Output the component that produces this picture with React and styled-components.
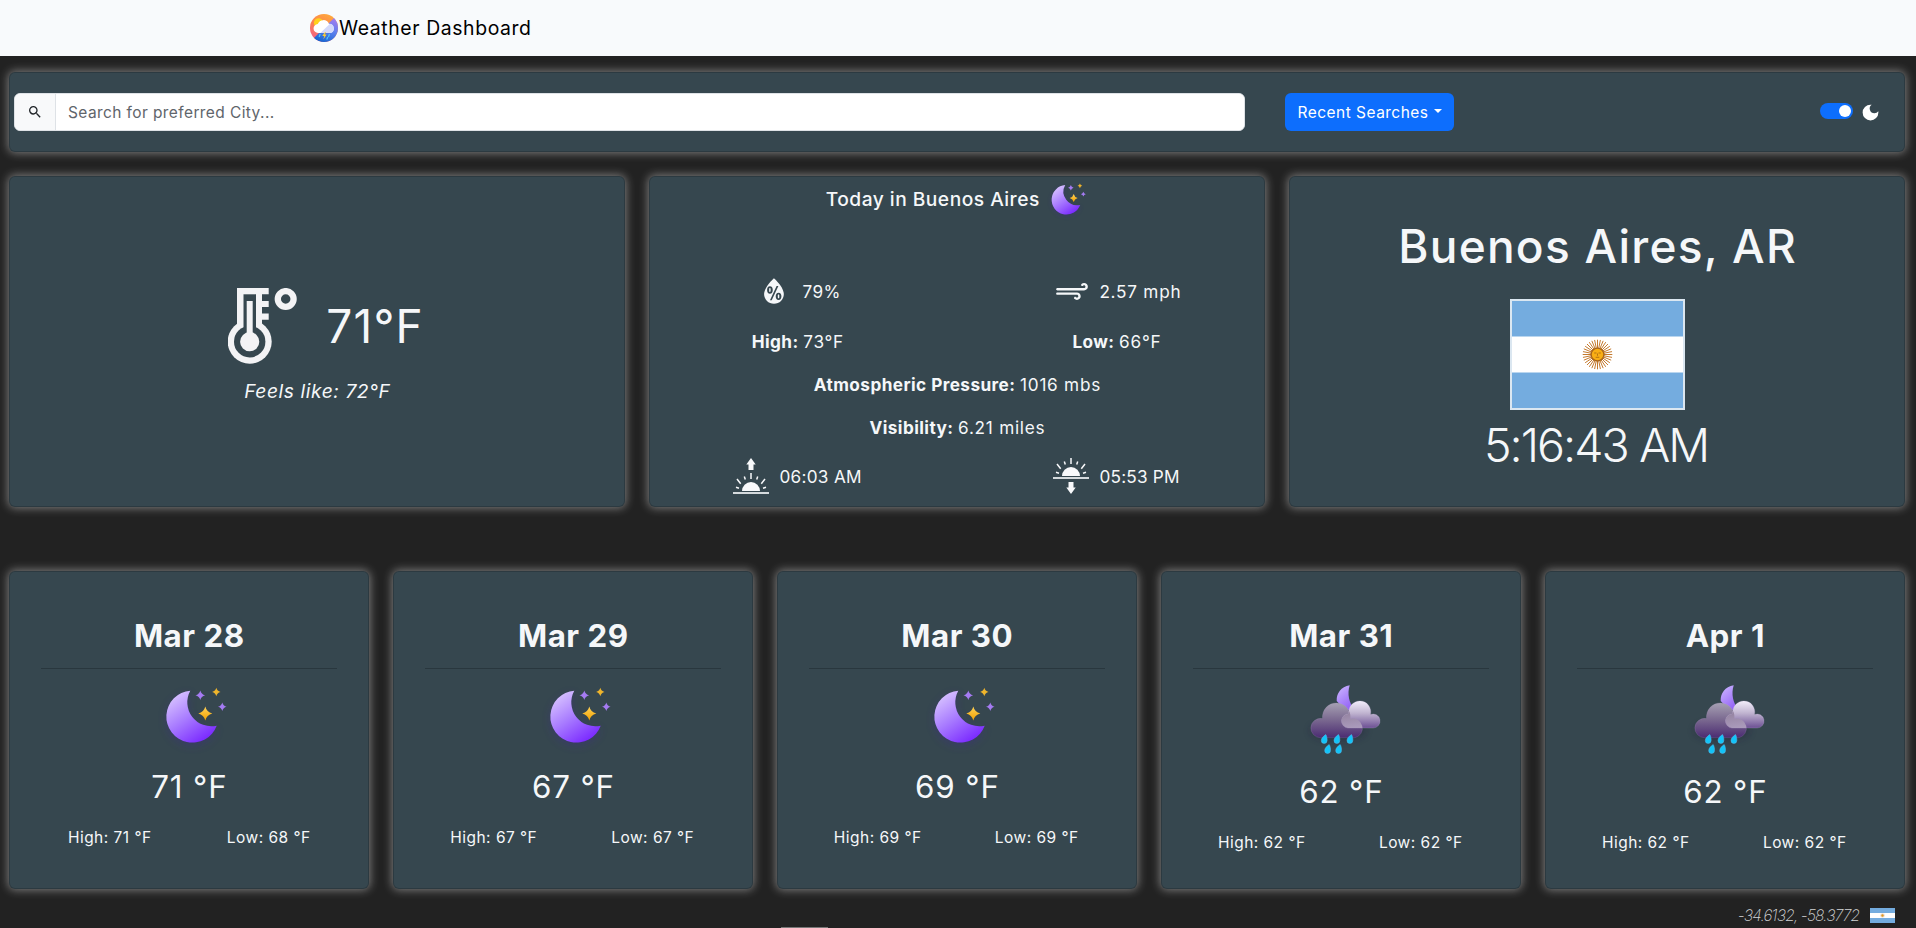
import React from "react";
import styled, { createGlobalStyle, css } from "styled-components";
import { MdDarkMode, MdSearch } from "react-icons/md";
import { WiHumidity, WiStrongWind } from "react-icons/wi";

const card = "#36474f";
const light = "#f5f7f9";

const GlobalStyle = createGlobalStyle`
  * { box-sizing: border-box; }
  html, body { height: 100%; overflow: hidden; }
  body {
    margin: 0;
    background: #222;
    color: ${light};
    font-family: Inter, "Liberation Sans", sans-serif;
    font-size: 15.5px;
  }
  svg { display: block; flex: none; }
`;

/* Letter spacing without the trailing gap, so centred text stays centred. */
const spaced = (px) => css`
  letter-spacing: ${px}px;
  margin-right: ${-px}px;
  white-space: nowrap;
`;

const Page = styled.div`
  display: flex;
  flex-direction: column;
  height: 928px;
  overflow: hidden;
`;

const Navbar = styled.header`
  display: flex;
  align-items: center;
  flex: none;
  height: 56px;
  padding-left: 310px;
  background: #f8fafc;
  color: #000;
`;

const Brand = styled.span`
  padding-left: 1px;
  font-size: 19.4px;
  ${spaced(0.6)}
`;

const Main = styled.main`
  display: flex;
  flex-direction: column;
  gap: 24px;
  padding: 16px 11px 0 9px;
`;

const Panel = styled.section`
  background: ${card};
  border: 1px solid rgba(0, 0, 0, 0.175);
  border-radius: 6px;
  box-shadow: 0 0 10px 1px rgba(255, 255, 255, 0.42);
`;

const SearchPanel = styled(Panel)`
  display: flex;
  align-items: center;
  height: 80px;
  padding: 0 23px 0 4px;
`;

const InputGroup = styled.div`
  display: flex;
  width: 1231px;
  height: 38px;
  border: 1px solid #dee2e6;
  border-radius: 6px;
  background: #fff;
  overflow: hidden;
`;

const InputAddon = styled.span`
  display: flex;
  align-items: center;
  justify-content: center;
  width: 41px;
  border-right: 1px solid #dee2e6;
  background: #f8f9fa;
  color: #212529;
`;

const SearchInput = styled.input`
  flex: 1;
  border: 0;
  outline: 0;
  padding: 1px 12px 0;
  font: inherit;
  letter-spacing: 0.4px;
  &::placeholder { color: #5f656b; opacity: 1; }
`;

const RecentButton = styled.button`
  display: flex;
  align-items: center;
  gap: 5px;
  width: 169px;
  height: 38px;
  margin-left: 40px;
  padding: 1px 0 0 12.5px;
  border: 0;
  border-radius: 6px;
  background: #0d6efd;
  color: #fff;
  font: inherit;
`;

const ButtonLabel = styled.span`
  ${spaced(0.47)}
`;

const Caret = styled.span`
  margin: -3px 0 0 1px;
  border: 4.5px solid transparent;
  border-top-color: #fff;
  border-bottom: 0;
`;

const ThemeToggle = styled.div`
  display: flex;
  align-items: center;
  gap: 7px;
  margin-left: auto;
`;

const Switch = styled.span`
  display: flex;
  justify-content: flex-end;
  width: 33px;
  height: 16px;
  margin-top: -3px;
  padding: 2px;
  border-radius: 8px;
  background: #0d6efd;
  &::after {
    content: "";
    width: 12px;
    height: 12px;
    border-radius: 50%;
    background: #fff;
  }
`;

const Overview = styled.div`
  display: grid;
  grid-template-columns: repeat(3, minmax(0, 1fr));
  gap: 24px;
`;

const OverviewPanel = styled(Panel)`
  display: flex;
  flex-direction: column;
  align-items: center;
  height: 331px;
`;

const CurrentPanel = styled(OverviewPanel)`
  padding-top: 100px;
`;

const CurrentRow = styled.div`
  display: flex;
  align-items: center;
  gap: 29px;
  height: 98px;
  padding-left: 17px;
`;

const CurrentTemp = styled.span`
  font-size: 46px;
  ${spaced(1.2)}
`;

const FeelsLike = styled.em`
  line-height: 32px;
  font-size: 19.2px;
  ${spaced(0.58)}
`;

const DetailTitle = styled.h2`
  display: flex;
  align-items: center;
  gap: 13px;
  height: 44px;
  margin: 0 0 45px;
  padding-right: 2px;
  font-size: 19.2px;
  font-weight: 500;
`;

const TitleText = styled.span`
  ${spaced(0.48)}
`;

const DetailRow = styled.div`
  display: flex;
  align-items: center;
  justify-content: center;
  flex: none;
  width: 638px;
  height: ${(p) => p.$height}px;
`;

const DetailCell = styled.div`
  display: flex;
  align-items: center;
  justify-content: center;
  gap: ${(p) => p.$gap ?? 5}px;
  width: 319px;
`;

const DetailPair = styled.div`
  display: flex;
  gap: 5px;
`;

const Value = styled.span`
  font-size: 17.2px;
  ${(p) => spaced(p.$spacing ?? 0.75)}
`;

const Label = styled.strong`
  font-size: 17.2px;
  font-weight: 700;
  ${(p) => spaced(p.$spacing ?? 0.43)}
`;

const PlacePanel = styled(OverviewPanel)`
  padding-top: 39px;
`;

const PlaceName = styled.h1`
  margin: 0 0 23px;
  font-size: 46px;
  font-weight: 500;
  line-height: 60px;
  ${spaced(1.25)}
`;

const FlagFrame = styled.div`
  width: 175px;
  height: 111px;
  border: 2px solid #dbe7f1;
`;

const Clock = styled.div`
  margin-top: 6px;
  font-size: 46.5px;
  font-weight: 350;
  line-height: 58px;
  ${spaced(-1.95)}
`;

const Forecast = styled.div`
  display: grid;
  grid-template-columns: repeat(5, minmax(0, 1fr));
  gap: 24px;
  margin-top: 40px;
`;

const DayPanel = styled(Panel)`
  display: flex;
  flex-direction: column;
  align-items: center;
  height: 318px;
  padding: 39px 31px 0;
`;

const DayName = styled.h3`
  margin: 0;
  font-size: 31.3px;
  font-weight: 700;
  line-height: 50px;
  ${spaced(0.5)}
`;

const Divider = styled.hr`
  flex: none;
  width: 100%;
  height: 1px;
  margin: 7px 0 0;
  border: 0;
  background: #29373e;
`;

const DayIcon = styled.div`
  display: flex;
  justify-content: center;
  height: ${(p) => (p.$tall ? 98 : 93)}px;
  padding: ${(p) => (p.$tall ? "15px 0 0 10px" : "18px 0 0 15px")};
`;

const DayTemp = styled.div`
  font-size: 31.3px;
  line-height: 50px;
  ${spaced(0.85)}
`;

const RangeRow = styled.div`
  display: grid;
  grid-template-columns: 159px 159px;
  margin-top: 14px;
  line-height: 24px;
  text-align: center;
`;

const RangeText = styled.span`
  ${spaced(0.47)}
`;

const Footer = styled.footer`
  display: flex;
  align-items: center;
  justify-content: flex-end;
  gap: 10px;
  height: 34px;
  padding: 4px 21px 0 0;
  margin-top: 10px;
`;

const Coordinates = styled.em`
  color: #d2d4d6;
  font-size: 15.5px;
  font-weight: 200;
  ${spaced(-0.85)}
`;

const BottomHandle = styled.div`
  position: absolute;
  left: 781px;
  top: 927px;
  width: 47px;
  height: 1px;
  background: #777;
`;

function Logo() {
  return (
    <svg width="28" height="28" viewBox="0 0 28 28">
      <defs>
        <linearGradient id="logoWarm" x1="0.6" y1="0" x2="0.1" y2="1">
          <stop offset="0" stopColor="#ffa63d" />
          <stop offset="0.45" stopColor="#fb8050" />
          <stop offset="1" stopColor="#ef5b94" />
        </linearGradient>
        <linearGradient id="logoCool" x1="0.8" y1="0" x2="0.4" y2="1">
          <stop offset="0" stopColor="#a77bf0" />
          <stop offset="0.5" stopColor="#5f80ee" />
          <stop offset="1" stopColor="#1767d2" />
        </linearGradient>
        <clipPath id="logoRound"><circle cx="14" cy="14" r="14" /></clipPath>
      </defs>
      <g clipPath="url(#logoRound)">
        <rect width="28" height="28" fill="url(#logoWarm)" />
        <path d="M25 3 3 25l8 3h17V3z" fill="url(#logoCool)" />
        <circle cx="8.5" cy="8.8" r="4.6" fill="#ffd21c" />
        <path d="M8.3 19a4.5 4.5 0 0 1-.5-9 6 6 0 0 1 11.1-.3 4.8 4.8 0 0 1 1.7 9.3z" fill="#fff" />
        <path d="m20 9.7-9.7 9.3h10.3A4.8 4.8 0 0 0 20 9.7" fill="#d3d9fb" />
        <path d="m15 18-2.7 4h2l-1 3.6 3.3-5h-2l1.4-2.6z" fill="#ffcf30" />
        <path d="m10 20.5-.7 2m10-2-.7 2m-1 1-.6 1.6" stroke="#4cc3fb" strokeWidth="1.3" strokeLinecap="round" />
      </g>
    </svg>
  );
}

function Thermometer() {
  return (
    <svg width="69" height="76" viewBox="0 0 69 76" fill="#f3f3f5">
      <path d="M9 0h25v40H9z" />
      <circle cx="21.7" cy="53.7" r="22" />
      <path d="M30 0h10.7v6.3H30zM30 13h10.7v6H30zM30 25.5h10.7v6.3H30z" />
      <path d="M15.5 6.3H28V42H15.5z" fill={card} />
      <circle cx="21.7" cy="53.7" r="15.7" fill={card} />
      <path d="M18.7 13h6v35h-6z" />
      <circle cx="21.7" cy="53.7" r="9.6" />
      <circle cx="57.7" cy="11" r="7.9" fill="none" stroke="#f3f3f5" strokeWidth="6.3" />
    </svg>
  );
}

function SunRays({ y }) {
  return (
    <g transform={`translate(0 ${y})`}>
      <path d="M9 18a9 9 0 0 1 18 0z" fill="#f8f9fb" />
      <path d="M0 20h36" stroke="#d5dadd" strokeWidth="1.8" />
      <path
        d="M18 0v6M4 6l3.7 4.7M32 6l-3.7 4.7M11.3 3.4l1 3M24.7 3.4l-1 3M3 14.3l3 1M33 14.3l-3 1"
        stroke="#f8f9fb"
        strokeWidth="1.5"
      />
    </g>
  );
}

function Sunrise() {
  return (
    <svg width="36" height="36" viewBox="0 0 36 36">
      <path d="m18 0 4.7 6.5h-2.2V12h-5V6.5h-2.2z" fill="#f8f9fb" />
      <SunRays y={15} />
    </svg>
  );
}

function Sunset() {
  return (
    <svg width="36" height="36" viewBox="0 0 36 36">
      <SunRays y={0} />
      <path d="m18 36 4.7-6.5h-2.2V24h-5v5.5h-2.2z" fill="#f8f9fb" />
    </svg>
  );
}

const star = (x, y, r) => {
  const k = r * 0.2;
  return `M${x} ${y - r}Q${x + k} ${y - k} ${x + r} ${y}Q${x + k} ${y + k} ${x} ${y + r}Q${x - k} ${y + k} ${x - r} ${y}Q${x - k} ${y - k} ${x} ${y - r}z`;
};

const crescent = "M23.3 3.7A26 26 0 1 0 49.7 38.7A24 24 0 0 1 23.3 3.7z";

function NightMoon({ id, width }) {
  return (
    <svg width={width} height={(width * 56) / 60} viewBox="0 0 60 56" overflow="visible">
      <defs>
        <linearGradient id={`${id}-moon`} x1="0.15" y1="0.05" x2="0.75" y2="0.95">
          <stop offset="0" stopColor="#d9c5ff" />
          <stop offset="0.5" stopColor="#a87bff" />
          <stop offset="1" stopColor="#7b2bff" />
        </linearGradient>
        <linearGradient id={`${id}-gold`} x1="0" y1="0" x2="0" y2="1">
          <stop offset="0" stopColor="#ffd257" />
          <stop offset="1" stopColor="#f2a100" />
        </linearGradient>
        <filter id={`${id}-glow`} x="-40%" y="-40%" width="180%" height="180%">
          <feGaussianBlur stdDeviation="4" />
        </filter>
      </defs>
      <path
        d={crescent}
        transform="translate(0 3)"
        fill="#3c2a8c"
        opacity="0.4"
        filter={`url(#${id}-glow)`}
      />
      <path d={crescent} fill={`url(#${id}-moon)`} />
      <path d={star(33.3, 8.3, 4.8) + star(55.3, 19.7, 4.3)} fill="#a57bf2" />
      <path d={star(49.3, 5, 4.2)} fill="#efb52c" />
      <path d={star(38.3, 26.5, 7)} fill={`url(#${id}-gold)`} />
    </svg>
  );
}

const drops = [[13.3, 55], [26, 55], [39, 55], [16.7, 65], [27.7, 65]];
const backCloud = "M9.7 53.7A9.7 9.7 0 1 1 11.5 34.5A14 14 0 1 1 39.3 34.7A9.6 9.6 0 1 1 44 53.7z";
const frontCloud = "M37 44A7 7 0 1 1 38 30A11 11 0 1 1 59.5 30.5A7 7 0 1 1 62 44z";

function NightRain({ id }) {
  return (
    <svg width="70" height="70" viewBox="0 0 70 70" overflow="visible">
      <defs>
        <linearGradient id={`${id}-moon`} x1="0.2" y1="0" x2="0.8" y2="1">
          <stop offset="0" stopColor="#c9b2ff" />
          <stop offset="1" stopColor="#8f5cf5" />
        </linearGradient>
        <linearGradient id={`${id}-cloud`} x1="0" y1="0" x2="0" y2="1">
          <stop offset="0" stopColor="#a6a0b3" />
          <stop offset="0.5" stopColor="#79678f" />
          <stop offset="1" stopColor="#4b2c72" />
        </linearGradient>
        <linearGradient id={`${id}-front`} x1="0" y1="0" x2="0" y2="1">
          <stop offset="0" stopColor="#f3eefb" />
          <stop offset="0.45" stopColor="#c0b4d0" />
          <stop offset="1" stopColor="#6c4f93" />
        </linearGradient>
        <linearGradient id={`${id}-overlap`} x1="0" y1="0" x2="0.2" y2="1">
          <stop offset="0" stopColor="#d6c8f0" />
          <stop offset="0.4" stopColor="#93829f" />
          <stop offset="1" stopColor="#aa9abb" />
        </linearGradient>
        <clipPath id={`${id}-clip`}><path d={backCloud} /></clipPath>
        <filter id={`${id}-shade`} x="-40%" y="-40%" width="180%" height="180%">
          <feGaussianBlur stdDeviation="3.5" />
        </filter>
      </defs>
      <ellipse cx="27" cy="47" rx="28" ry="10" fill="#1d1538" opacity="0.35" filter={`url(#${id}-shade)`} />
      <path d="M38.7 1.3C30 3 25.5 9 25.7 17L34 26H43.5C38 19 36 10 38.7 1.3z" fill={`url(#${id}-moon)`} />
      <path d={backCloud} fill={`url(#${id}-cloud)`} stroke="#b3a3cc" strokeOpacity="0.35" strokeWidth="0.5" />
      <path d={frontCloud} fill={`url(#${id}-front)`} stroke="#cdbfe4" strokeOpacity="0.4" strokeWidth="0.5" />
      <path d={frontCloud} fill={`url(#${id}-overlap)`} clipPath={`url(#${id}-clip)`} />
      {drops.map(([x, y]) => (
        <path
          key={`${x}-${y}`}
          d="M1.5-4.5C-1-2.8-3-.6-3 1.4A2.9 2.9 0 0 0 2.8 1.7C3-.3 2.5-3 1.5-4.5z"
          transform={`translate(${x} ${y})`}
          fill="#12c4f8"
          stroke="#5cb4e6"
          strokeWidth="0.5"
        />
      ))}
    </svg>
  );
}

const rays = Array.from({ length: 32 }, (_, i) => {
  const a = (i * Math.PI) / 16;
  return `M${(Math.cos(a) * 5.5).toFixed(2)} ${(Math.sin(a) * 5.5).toFixed(2)}L${(Math.cos(a) * 14.8).toFixed(2)} ${(Math.sin(a) * 14.8).toFixed(2)}`;
}).join("");

function ArgentineFlag({ width, height }) {
  return (
    <svg width={width} height={height} viewBox="0 0 171 107" preserveAspectRatio="none">
      <path d="M0 0h171v107H0z" fill="#74acdf" />
      <path d="M0 35.6h171v35.8H0z" fill="#fff" />
      <g transform="translate(85.5 53.5)">
        <path d={rays} stroke="#c47a2e" strokeWidth="1" />
        <circle r="6.4" fill="#f9ae14" stroke="#a8651a" strokeWidth="1.4" />
        <path d="M-3.300-1.500h2.300M1-1.500h2.300M0-1v2.300M-1.800 2.800h3.600" stroke="#9a5a10" strokeWidth="0.7" />
      </g>
    </svg>
  );
}

const days = [
  { name: "Mar 28", icon: "moon", temp: 71, high: 71, low: 68 },
  { name: "Mar 29", icon: "moon", temp: 67, high: 67, low: 67 },
  { name: "Mar 30", icon: "moon", temp: 69, high: 69, low: 69 },
  { name: "Mar 31", icon: "rain", temp: 62, high: 62, low: 62 },
  { name: "Apr 1", icon: "rain", temp: 62, high: 62, low: 62 },
];

function Day({ day, id }) {
  const rain = day.icon === "rain";
  return (
    <DayPanel>
      <DayName>{day.name}</DayName>
      <Divider />
      <DayIcon $tall={rain}>{rain ? <NightRain id={id} /> : <NightMoon id={id} width={60} />}</DayIcon>
      <DayTemp>{day.temp} °F</DayTemp>
      <RangeRow>
        <RangeText>High: {day.high} °F</RangeText>
        <RangeText>Low: {day.low} °F</RangeText>
      </RangeRow>
    </DayPanel>
  );
}

export default function App() {
  return (
    <Page>
      <GlobalStyle />
      <Navbar>
        <Logo />
        <Brand>Weather Dashboard</Brand>
      </Navbar>
      <Main>
        <SearchPanel>
          <InputGroup>
            <InputAddon><MdSearch size={16} /></InputAddon>
            <SearchInput placeholder="Search for preferred City..." />
          </InputGroup>
          <RecentButton>
            <ButtonLabel>Recent Searches</ButtonLabel>
            <Caret />
          </RecentButton>
          <ThemeToggle>
            <Switch />
            <MdDarkMode size={21} color="#fff" />
          </ThemeToggle>
        </SearchPanel>

        <Overview>
          <CurrentPanel>
            <CurrentRow>
              <Thermometer />
              <CurrentTemp>71°F</CurrentTemp>
            </CurrentRow>
            <FeelsLike>Feels like: 72°F</FeelsLike>
          </CurrentPanel>

          <OverviewPanel>
            <DetailTitle>
              <TitleText>Today in Buenos Aires</TitleText>
              <NightMoon id="today" width={34} />
            </DetailTitle>
            <DetailRow $height={50}>
              <DetailCell $gap={8}>
                <WiHumidity size={40} />
                <Value $spacing={0.45}>79%</Value>
              </DetailCell>
              <DetailCell $gap={7}>
                <WiStrongWind size={40} />
                <Value>2.57 mph</Value>
              </DetailCell>
            </DetailRow>
            <DetailRow $height={50}>
              <DetailCell>
                <Label>High:</Label>
                <Value>73°F</Value>
              </DetailCell>
              <DetailCell>
                <Label>Low:</Label>
                <Value>66°F</Value>
              </DetailCell>
            </DetailRow>
            <DetailRow $height={36}>
              <DetailPair>
                <Label>Atmospheric Pressure:</Label>
                <Value>1016 mbs</Value>
              </DetailPair>
            </DetailRow>
            <DetailRow $height={50}>
              <DetailPair>
                <Label>Visibility:</Label>
                <Value>6.21 miles</Value>
              </DetailPair>
            </DetailRow>
            <DetailRow $height={48}>
              <DetailCell $gap={10}>
                <Sunrise />
                <Value $spacing={0.3}>06:03 AM</Value>
              </DetailCell>
              <DetailCell $gap={10}>
                <Sunset />
                <Value $spacing={0.22}>05:53 PM</Value>
              </DetailCell>
            </DetailRow>
          </OverviewPanel>

          <PlacePanel>
            <PlaceName>Buenos Aires, AR</PlaceName>
            <FlagFrame><ArgentineFlag width={171} height={107} /></FlagFrame>
            <Clock>5:16:43 AM</Clock>
          </PlacePanel>
        </Overview>

        <Forecast>
          {days.map((day, i) => (
            <Day key={day.name} day={day} id={`day${i}`} />
          ))}
        </Forecast>
      </Main>
      <Footer>
        <Coordinates>-34.6132, -58.3772</Coordinates>
        <ArgentineFlag width={25} height={15} />
      </Footer>
      <BottomHandle />
    </Page>
  );
}
